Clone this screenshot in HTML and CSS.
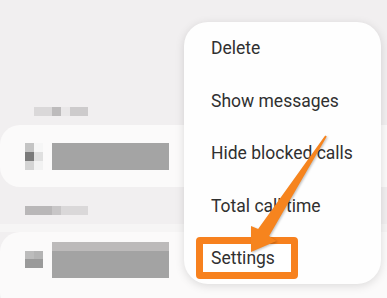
FILE: index.html
```html
<!DOCTYPE html>
<html>
<head>
<meta charset="utf-8">
<link rel="stylesheet" href="styles.css">
</head>
<body>
<div class="screen">
  <div class="list">
    <div class="label label-one">
      <span class="px p1"></span><span class="px p2"></span><span class="px p3"></span><span class="px p4"></span>
    </div>
    <div class="card card-one">
      <div class="icon">
        <span class="c1"></span><span class="c0"></span>
        <span class="c2"></span><span class="c3"></span>
        <span class="c4"></span><span class="c5"></span>
      </div>
      <div class="bar"></div>
    </div>
    <div class="gap">
      <div class="label label-two">
        <span class="px q1"></span><span class="px q2"></span><span class="px q3"></span>
      </div>
    </div>
    <div class="card card-two">
      <div class="icon icon-two">
        <span class="d1"></span><span class="d2"></span>
        <span class="d3"></span><span class="d3"></span>
      </div>
      <div class="bar bar-two"></div>
    </div>
  </div>

  <div class="menu">
    <div class="item">Delete</div>
    <div class="item">Show messages</div>
    <div class="item">Hide blocked calls</div>
    <div class="item">Total call time</div>
    <div class="item"><span class="highlight">Settings</span></div>
  </div>

  <svg class="arrow" width="387" height="298" viewBox="0 0 387 298">
    <polygon points="325.2,135.5 326.8,136.5 269.1,236.1 276.5,241 251,252 251,226 258.1,229.1" fill="#f6841e"/>
  </svg>
</div>
</body>
</html>
```

FILE: styles.css
```css
html, body {
  margin: 0;
  padding: 0;
}
body {
  width: 387px;
  height: 298px;
  overflow: hidden;
  background: #f1eff0;
  font-family: Roboto, "Noto Sans", sans-serif;
}
.screen {
  position: relative;
  width: 387px;
  height: 298px;
  overflow: hidden;
}
.list {
  padding-top: 96px;
  display: flex;
  flex-direction: column;
}
.label {
  display: flex;
  height: 9px;
}
.label-one {
  height: 29px;
  padding-left: 34px;
  padding-top: 11px;
  box-sizing: border-box;
  align-items: flex-start;
}
.px {
  display: block;
  height: 9px;
}
.p1 { width: 18px; background: #dad8d9; }
.p2 { width: 9px; background: #bdbbbc; }
.p3 { width: 9px; background: #e9e7e8; }
.p4 { width: 18px; background: #cdcbcc; }
.card {
  background: #fbfafa;
  border-radius: 20px 0 0 20px;
  display: flex;
  align-items: flex-start;
  padding-left: 25px;
}
.card-one {
  height: 62px;
  padding-top: 18px;
  box-sizing: border-box;
}
.card-two {
  height: 80px;
  padding-top: 10px;
  box-sizing: border-box;
}
.icon {
  width: 18px;
  display: grid;
  grid-template-columns: 9px 9px;
  grid-auto-rows: 9px;
  margin-right: 9px;
}
.icon span { display: block; }
.c1 { background: #c4c4c4; }
.c0 { background: #f6f6f6; }
.c2 { background: #7a7a7a; }
.c3 { background: #e0e0e0; }
.c4 { background: #d4d4d4; }
.c5 { background: #f2f2f2; }
.icon-two {
  margin-top: 9px;
  grid-auto-rows: 8px 9px;
}
.d1 { background: #bcbcbc; }
.d2 { background: #b4b4b4; }
.d3 { background: #9a9a9a; }
.bar {
  width: 117px;
  height: 27px;
  background: #a4a4a4;
}
.bar-two {
  height: 36px;
  background: linear-gradient(#bcbaba 0 9px, #a3a3a3 9px);
}
.gap {
  height: 45px;
  padding-top: 19px;
  padding-left: 25px;
  box-sizing: border-box;
  background: linear-gradient(#f1eff0 0 37px, #f6f5f5 37px);
}
.label-two { height: 9px; }
.q1 { width: 27px; background: #b9b7b8; }
.q2 { width: 9px; background: #c8c6c7; }
.q3 { width: 27px; background: #dad8d9; }
.menu {
  position: absolute;
  left: 184px;
  top: 22px;
  width: 197px;
  height: 262px;
  background: #fefefe;
  border-radius: 24px;
  box-shadow: 0 2px 10px rgba(0, 0, 0, 0.13);
}
.item {
  height: 52.5px;
  display: flex;
  align-items: center;
  padding-left: 27px;
  font-size: 17.5px;
  color: #303030;
  white-space: nowrap;
}
.highlight {
  display: inline-block;
  margin-left: -15px;
  padding-left: 8px;
  width: 80px;
  height: 28px;
  line-height: 28px;
  border: 7px solid #f7811e;
  border-radius: 4px;
  background: #ffffff;
}
.arrow {
  position: absolute;
  left: 0;
  top: 0;
  pointer-events: none;
  filter: drop-shadow(1px 1px 1px rgba(0, 0, 0, 0.25));
}
```
